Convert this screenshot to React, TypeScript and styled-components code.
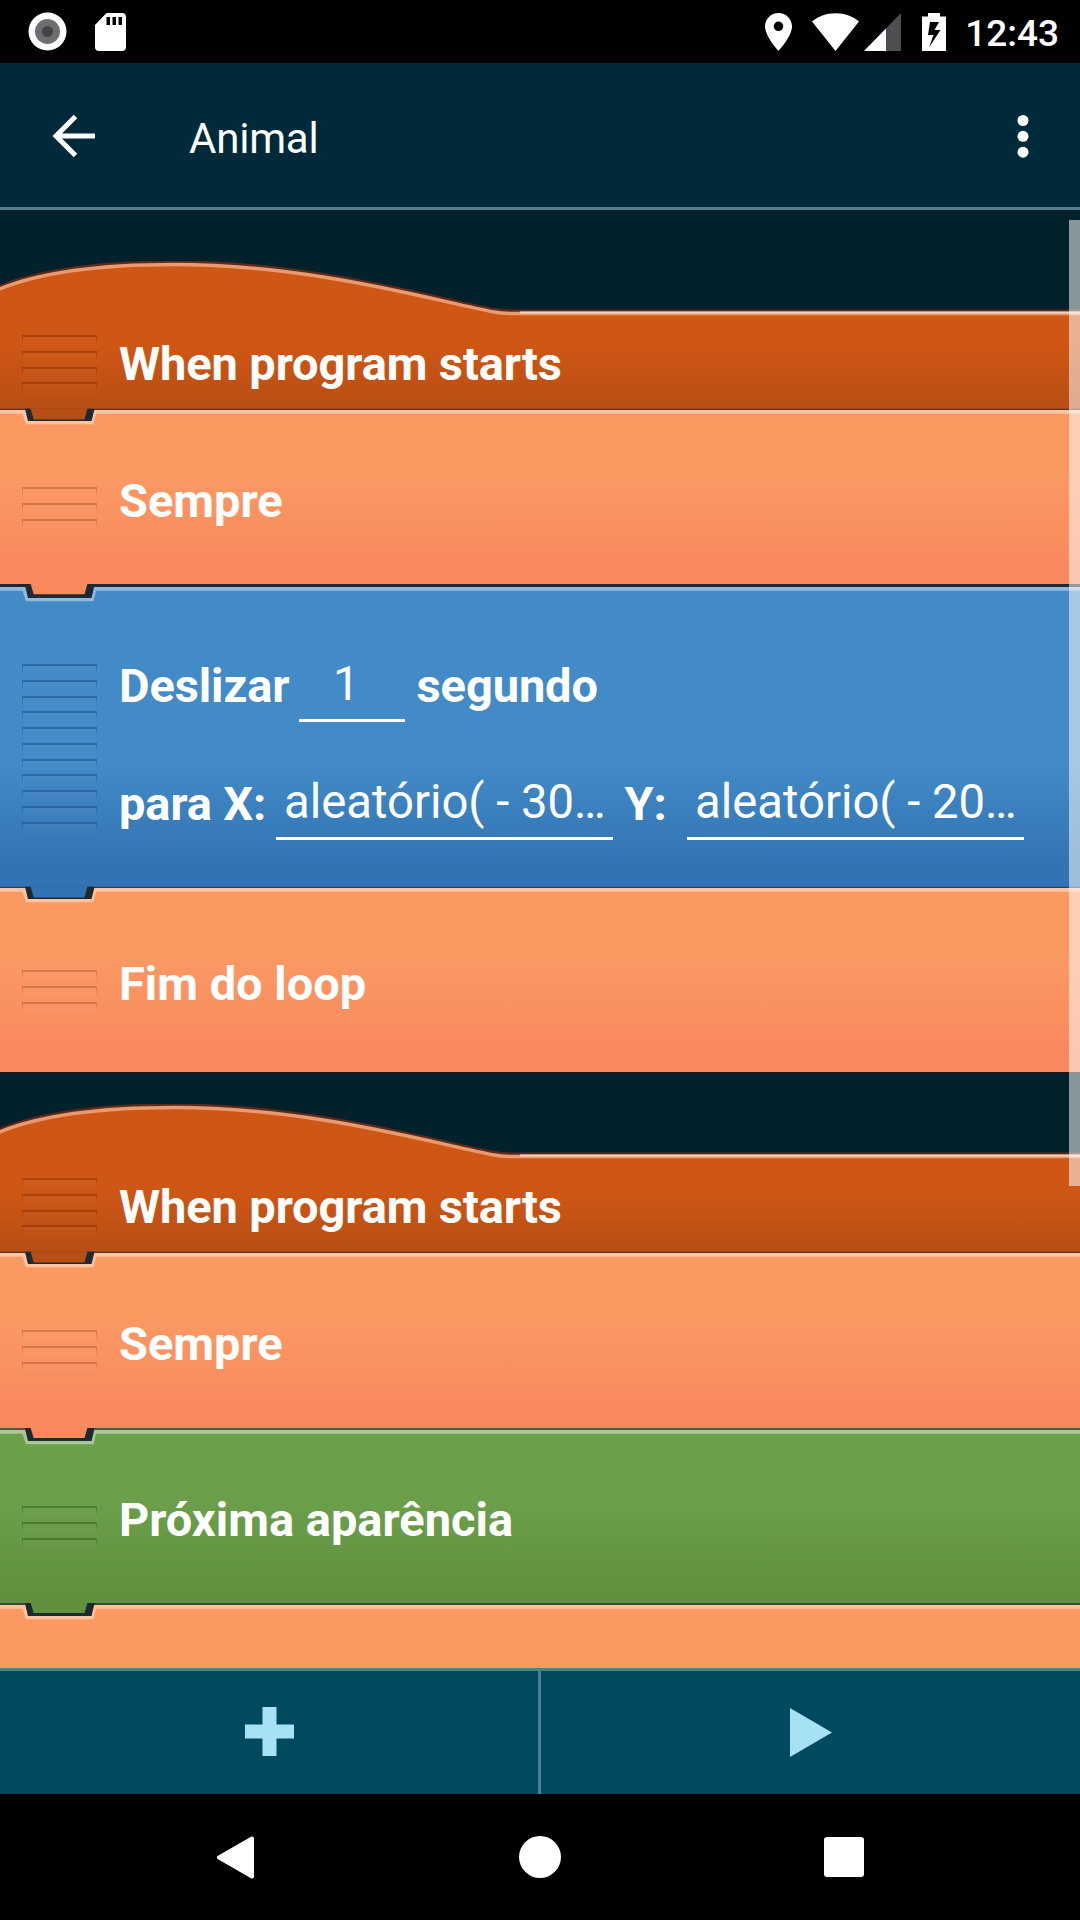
import React from "react";
import styled, { createGlobalStyle } from "styled-components";

const GlobalStyle = createGlobalStyle`
  * { box-sizing: border-box; }
  body { margin: 0; background: #000; font-family: Roboto, "Noto Sans", sans-serif; }
`;

type Tone = { top: string; bottom: string; line: string; split: number };

const tones: Record<string, Tone> = {
  control: { top: "#fb9963", bottom: "#f9885d", line: "rgba(160, 80, 35, 0.42)", split: 36 },
  motion: { top: "#428bc7", bottom: "#3274b3", line: "rgba(20, 75, 140, 0.5)", split: 58 },
  looks: { top: "#6c9f4c", bottom: "#5f913f", line: "rgba(45, 90, 25, 0.5)", split: 40 },
};

const HAT_BOTTOM = "#b74e14";

const Screen = styled.div`
  width: 1080px;
  height: 1920px;
  display: flex;
  flex-direction: column;
  overflow: hidden;
  color: #fff;
`;

const StatusBar = styled.header`
  height: 63px;
  flex: none;
  display: flex;
  align-items: center;
  justify-content: space-between;
  background: #000;
  padding: 0 21px 0 28px;
`;

const StatusGroup = styled.div`
  display: flex;
  align-items: center;
`;

const Icon = styled.svg<{ $gap?: number; $lift?: number }>`
  display: block;
  flex: none;
  margin-left: ${(p) => p.$gap ?? 0}px;
  margin-bottom: ${(p) => p.$lift ?? 0}px;
`;

const Clock = styled.span`
  margin-left: 19px;
  font-size: 37px;
  font-weight: 500;
  line-height: 40px;
  padding-top: 5px;
`;

const AppBar = styled.div`
  height: 147px;
  flex: none;
  display: flex;
  align-items: center;
  background: #00293a;
  border-bottom: 3px solid #4f808b;
  padding: 2px 51px 0 52px;
`;

const Title = styled.h1`
  margin: 0 auto 0 93px;
  font-size: 42px;
  font-weight: 400;
  letter-spacing: -0.2px;
  line-height: 50px;
  padding-top: 6px;
`;

const ScriptList = styled.main`
  position: relative;
  flex: 1;
  min-height: 0;
  display: flex;
  flex-direction: column;
  overflow: hidden;
  background: #02212b;
`;

const ScrollThumb = styled.div`
  position: absolute;
  top: 10px;
  right: 0;
  width: 11px;
  height: 966px;
  background: rgba(255, 255, 255, 0.53);
`;

const HatBlock = styled.section<{ $gap: number }>`
  flex: none;
  height: 149px;
  margin-top: ${(p) => p.$gap}px;
  display: grid;
  grid-template: 149px / 1080px;
  > * { grid-area: 1 / 1; }
`;

const Block = styled.section<{ $tone: Tone; $height?: number; $pad: number; $end?: boolean }>`
  position: relative;
  flex: ${(p) => (p.$height ? "none" : "1")};
  height: ${(p) => (p.$height ? `${p.$height}px` : "auto")};
  display: flex;
  align-items: flex-start;
  padding-top: ${(p) => p.$pad}px;
  background: linear-gradient(${(p) => `${p.$tone.top} ${p.$tone.split}%, ${p.$tone.bottom} 92%`});
  box-shadow: ${(p) => (p.$end ? "0 2px 0 #1b1a1f" : "none")};
`;

const HatContent = styled.div`
  display: flex;
  align-items: flex-start;
  padding-top: 75px;
`;

const Seam = styled.svg`
  position: absolute;
  top: -4px;
  left: 0;
`;

const Grip = styled.div<{ $top: number }>`
  flex: none;
  width: 75px;
  margin: ${(p) => p.$top}px 22px 0 22px;
`;

const GripLine = styled.div<{ $line: string }>`
  height: 15.75px;
  border-top: 2px solid ${(p) => p.$line};
  background:
    linear-gradient(${(p) => p.$line}, transparent 60%) left / 1px 100% no-repeat,
    linear-gradient(${(p) => p.$line}, transparent 60%) right / 1px 100% no-repeat,
    linear-gradient(rgba(255, 255, 255, 0.03), transparent);
`;

const Lines = styled.div`
  display: flex;
  flex-direction: column;
  gap: 62px;
`;

const Line = styled.div`
  display: flex;
  height: 56px;
`;

const Label = styled.span<{ $width?: number; $tight?: boolean }>`
  width: ${(p) => (p.$width ? `${p.$width}px` : "auto")};
  font-size: 47px;
  font-weight: 700;
  letter-spacing: ${(p) => (p.$tight ? "-0.1px" : "normal")};
  line-height: 56px;
  white-space: pre;
`;

const Field = styled.span<{ $width: number; $indent: number }>`
  width: ${(p) => p.$width}px;
  height: 66px;
  margin-top: -2px;
  padding-left: ${(p) => p.$indent}px;
  border-bottom: 3px solid #fff;
  font-size: 47.25px;
  line-height: 56px;
  white-space: pre;
`;

const ActionBar = styled.footer`
  flex: none;
  height: 126px;
  display: flex;
  border-top: 3px solid #4f8090;
  background: #01495f;
`;

const Action = styled.button<{ $width: number; $divided?: boolean }>`
  width: ${(p) => p.$width}px;
  display: flex;
  align-items: center;
  justify-content: center;
  border: 0;
  border-right: ${(p) => (p.$divided ? "3px solid #4a7f94" : "0")};
  background: none;
  padding: 0;
`;

const NavBar = styled.nav`
  flex: none;
  height: 126px;
  display: flex;
  align-items: center;
  justify-content: space-between;
  background: #000;
  padding: 0 216px;
`;

function GripLines({ count, top, line }: { count: number; top: number; line: string }) {
  return (
    <Grip $top={top}>
      {Array.from({ length: count }, (_, i) => (
        <GripLine key={i} $line={line} />
      ))}
    </Grip>
  );
}

function Notch({ fill, edge = 1.3, sill = 1.5 }: { fill: string; edge?: number; sill?: number }) {
  const floor = 11 - sill;
  return (
    <Seam width="1080" height="22" viewBox="0 -4 1080 22">
      <path d="M0 0H25L28 11H91.500L94.500 0H1080V3.700H96L93.500 14.300H26L22.500 3.700H0Z" fill="#fff" fillOpacity="0.42" />
      <path d={`M25 ${-edge}L28 11H91.500L94.500 ${-edge}Z`} fill="#1d2a31" />
      <path d={`M0 ${-edge}H1080V0H0Z`} fill="#1d2a31" fillOpacity={edge > 2 ? 1 : 0.65} />
      <path d={`M30.500 ${-edge - 0.5}L33.700 ${floor}H84.500L87.500 ${-edge - 0.5}Z`} fill={fill} />
    </Seam>
  );
}

function Hat({ id, gap }: { id: string; gap: number }) {
  const curve = "M-4 28C42 8 108 2 174 2C310 2 430 37 494 49.500Q502 51 514 51H1084";
  return (
    <HatBlock $gap={gap}>
      <svg width="1080" height="149" viewBox="0 0 1080 149">
        <defs>
          <linearGradient id={id} x1="0" y1="0" x2="0" y2="1">
            <stop offset="0.55" stopColor="#cf5715" />
            <stop offset="1" stopColor={HAT_BOTTOM} />
          </linearGradient>
        </defs>
        <path d={`${curve}V149H-4Z`} fill={`url(#${id})`} />
        <path d={curve} transform="translate(0 -1)" fill="none" stroke="#5d2a1a" strokeWidth="3" />
        <path d={curve} transform="translate(0 1.500)" fill="none" stroke="#eb9a70" strokeWidth="3.500" />
        <path d="M520 51.500H1080" stroke="#f8d3c0" strokeWidth="2" />
      </svg>
      <HatContent>
        <GripLines count={4} top={-1} line="rgba(130, 40, 5, 0.45)" />
        <Label $tight>When program starts</Label>
      </HatContent>
    </HatBlock>
  );
}

export default function App() {
  const { control, motion, looks } = tones;
  return (
    <Screen>
      <GlobalStyle />
      <StatusBar>
        <StatusGroup>
          <Icon width="39" height="39" viewBox="0 0 39 39">
            <circle cx="19.500" cy="19.500" r="19" fill="#fff" />
            <circle cx="19.500" cy="19.500" r="12.500" fill="#6f6d70" />
            <circle cx="19.500" cy="19.500" r="5.500" fill="#444246" />
          </Icon>
          <Icon $gap={28} width="31" height="38" viewBox="0 0 31 38">
            <path fill="#fff" fillRule="evenodd" d="M11.500 0H27Q31 0 31 4V34Q31 38 27 38H4Q0 38 0 34V12ZM11.500 4V12H15V4ZM17.500 4V12H21V4ZM23.500 4V12H27V4Z" />
          </Icon>
        </StatusGroup>
        <StatusGroup>
          <Icon width="27" height="38" viewBox="0 0 27 38">
            <path fill="#fff" fillRule="evenodd" d="M13.500 0C6 0 0 6 0 13.300C0 23.500 13.500 38 13.500 38S27 23.500 27 13.300C27 6 21 0 13.500 0ZM13.500 8.500A4.800 4.800 0 1 1 13.500 18.100A4.800 4.800 0 1 1 13.500 8.500Z" />
          </Icon>
          <Icon $gap={20} width="47" height="38" viewBox="0 0 47 38">
            <path fill="#fff" d="M23.500 38L0 8.500C6 3.500 14 .3 23.500 .3S41 3.500 47 8.500Z" />
          </Icon>
          <Icon $gap={5} width="37" height="38" viewBox="0 0 37 38">
            <path fill="#4f4d51" d="M37 0V38H0Z" />
            <path fill="#fff" d="M22 15.500V38H0Z" />
          </Icon>
          <Icon $gap={21.5} width="24" height="38" viewBox="0 0 24 38">
            <path fill="#fff" fillRule="evenodd" d="M6 0H18V3.500H24V38H0V3.500H6ZM8 9L6 22H11.500L7 34.500L18.500 17H12.500L17 9Z" />
          </Icon>
          <Clock>12:43</Clock>
        </StatusGroup>
      </StatusBar>

      <AppBar>
        <Icon width="44" height="44" viewBox="0 0 44 44">
          <path d="M23.500 2.500L4 22L23.500 41.500M4 22H43" fill="none" stroke="#fff" strokeWidth="5" />
        </Icon>
        <Title>Animal</Title>
        <Icon width="14" height="44" viewBox="0 0 14 44">
          <circle cx="8" cy="6.500" r="5.500" fill="#fff" />
          <circle cx="8" cy="22.300" r="5.500" fill="#fff" />
          <circle cx="8" cy="38.200" r="5.500" fill="#fff" />
        </Icon>
      </AppBar>

      <ScriptList>
        <Hat id="hat-first" gap={51} />
        <Block $tone={control} $height={177} $pad={63}>
          <Notch fill={HAT_BOTTOM} />
          <GripLines count={3} top={14} line={control.line} />
          <Label>Sempre</Label>
        </Block>
        <Block $tone={motion} $height={301} $pad={71}>
          <Notch fill={control.bottom} edge={3} sill={3.8} />
          <GripLines count={11} top={6} line={motion.line} />
          <Lines>
            <Line>
              <Label $width={180} $tight>Deslizar</Label>
              <Field $width={106} $indent={34}>1</Field>
              <Label $tight>{" segundo"}</Label>
            </Line>
            <Line>
              <Label $width={157} $tight>para X:</Label>
              <Field $width={337} $indent={8}>aleatório( - 30…</Field>
              <Label $width={74} $tight>{" Y:"}</Label>
              <Field $width={337} $indent={8}>aleatório( - 20…</Field>
            </Line>
          </Lines>
        </Block>
        <Block $tone={control} $height={184} $pad={68} $end>
          <Notch fill={motion.bottom} />
          <GripLines count={3} top={14} line={control.line} />
          <Label>Fim do loop</Label>
        </Block>
        <Hat id="hat-second" gap={32} />
        <Block $tone={control} $height={177} $pad={63}>
          <Notch fill={HAT_BOTTOM} />
          <GripLines count={3} top={14} line={control.line} />
          <Label>Sempre</Label>
        </Block>
        <Block $tone={looks} $height={175} $pad={62}>
          <Notch fill={control.bottom} edge={2} sill={3} />
          <GripLines count={3} top={14} line={looks.line} />
          <Label>Próxima aparência</Label>
        </Block>
        <Block $tone={{ ...control, bottom: control.top }} $pad={0}>
          <Notch fill={looks.bottom} edge={2} sill={3} />
        </Block>
        <ScrollThumb />
      </ScriptList>

      <ActionBar>
        <Action $width={541} $divided aria-label="Adicionar">
          <Icon $lift={3} width="49" height="49" viewBox="0 0 49 49">
            <path d="M17.500 0H31.500V17.500H49V31.500H31.500V49H17.500V31.500H0V17.500H17.500Z" fill="#a7e1f5" />
          </Icon>
        </Action>
        <Action $width={539} aria-label="Executar">
          <Icon $lift={1} width="42" height="49" viewBox="0 0 42 49">
            <path d="M0 0L42 24.500L0 49Z" fill="#a7e1f5" />
          </Icon>
        </Action>
      </ActionBar>

      <NavBar>
        <Icon width="39" height="43" viewBox="0 0 39 43">
          <path d="M36 2.500L3 21.500L36 40.500Z" fill="#fff" stroke="#fff" strokeWidth="4" strokeLinejoin="round" />
        </Icon>
        <Icon width="42" height="42" viewBox="0 0 42 42">
          <circle cx="21" cy="21" r="21" fill="#fff" />
        </Icon>
        <Icon width="40" height="40" viewBox="0 0 40 40">
          <rect width="40" height="40" rx="3" fill="#fff" />
        </Icon>
      </NavBar>
    </Screen>
  );
}
